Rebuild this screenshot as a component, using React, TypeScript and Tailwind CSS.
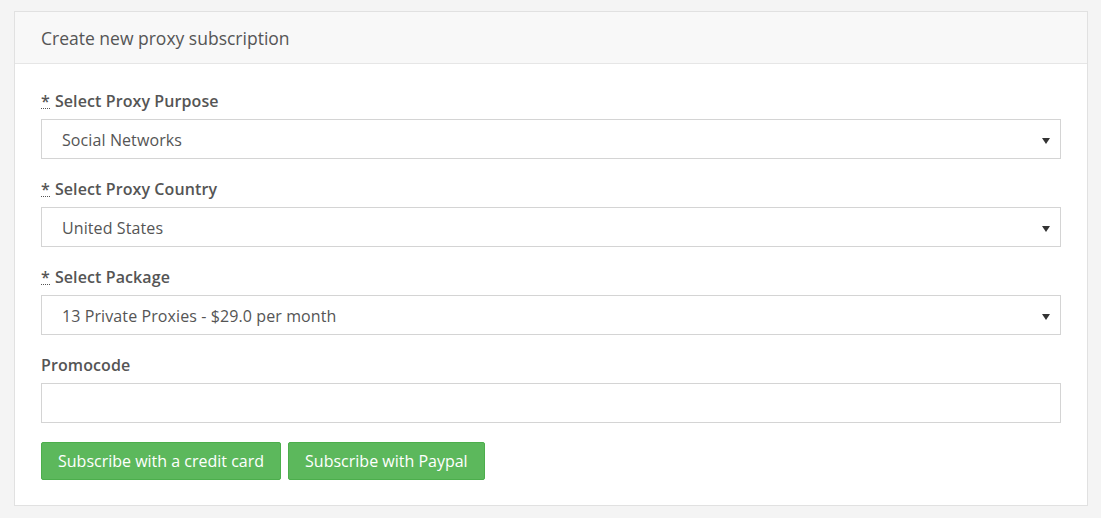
import React from "react";

function Caret() {
  return (
    <svg width="8" height="6" viewBox="0 0 8 6" className="absolute right-[10px] top-[18px]">
      <polygon points="0,0 8,0 4,6" fill="#333" />
    </svg>
  );
}

function Label({ text, required }: { text: string; required?: boolean }) {
  return (
    <div className="h-[20px] leading-[20px] mb-[8px] text-[16px] font-semibold text-[#555] tracking-[0.1px]">
      {required && (
        <abbr className="no-underline border-b border-dotted border-[#555] mr-[5px] leading-[14px] inline-block" title="required">
          *
        </abbr>
      )}
      {text}
    </div>
  );
}

function Select({ value }: { value: string }) {
  return (
    <div className="relative h-[40px] border border-[#d4d4d4] bg-white flex items-center pl-[20px] pt-[2px] text-[16px] text-[#555] tracking-[0.1px]">
      {value}
      <Caret />
    </div>
  );
}

export default function App() {
  return (
    <div
      className="w-[1101px] h-[518px] bg-[#f4f4f4] pt-[11px] pl-[14px]"
      style={{ fontFamily: '"Open Sans", "Noto Sans", sans-serif' }}
    >
      <div className="w-[1074px] h-[495px] border border-[#e1e1e1] bg-white">
        <div className="h-[52px] bg-[#f8f8f8] border-b border-[#e6e6e6] flex items-center pl-[26px] pt-[2px] text-[17.5px] text-[#555]">
          Create new proxy subscription
        </div>
        <div className="px-[26px] pt-[27px]">
          <Label text="Select Proxy Purpose" required />
          <Select value="Social Networks" />
          <div className="h-[20px]" />
          <Label text="Select Proxy Country" required />
          <Select value="United States" />
          <div className="h-[20px]" />
          <Label text="Select Package" required />
          <Select value="13 Private Proxies - $29.0 per month" />
          <div className="h-[20px]" />
          <Label text="Promocode" />
          <div className="h-[40px] border border-[#d4d4d4] bg-white" />
          <div className="flex gap-[7px] mt-[19px]">
            <button className="h-[38px] px-[16px] bg-[#5cb85c] border border-[#4cae4c] rounded-[2px] text-white text-[16px]">
              Subscribe with a credit card
            </button>
            <button className="h-[38px] px-[16px] bg-[#5cb85c] border border-[#4cae4c] rounded-[2px] text-white text-[16px]">
              Subscribe with Paypal
            </button>
          </div>
        </div>
      </div>
    </div>
  );
}
